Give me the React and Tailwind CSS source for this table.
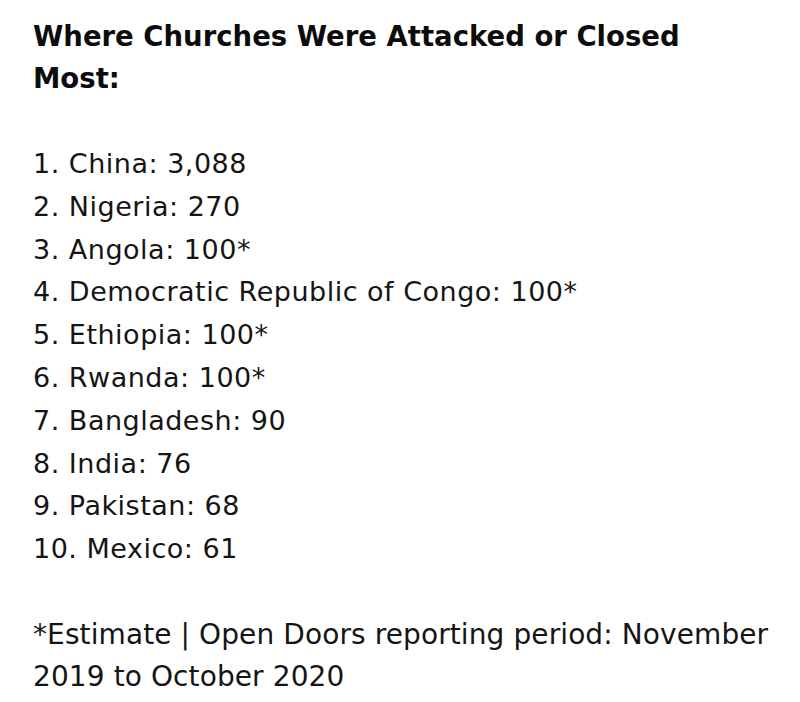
import React from 'react';

const countries = [
  { name: 'China', count: '3,088' },
  { name: 'Nigeria', count: '270' },
  { name: 'Angola', count: '100*' },
  { name: 'Democratic Republic of Congo', count: '100*' },
  { name: 'Ethiopia', count: '100*' },
  { name: 'Rwanda', count: '100*' },
  { name: 'Bangladesh', count: '90' },
  { name: 'India', count: '76' },
  { name: 'Pakistan', count: '68' },
  { name: 'Mexico', count: '61' },
];

const App = () => {
  return (
    <div className="w-[800px] h-[702px] bg-white overflow-hidden text-[#151515] font-['DejaVu_Sans',Verdana,sans-serif]">
      <div className="pl-[33px] pr-[20px] pt-[15px]">
        {/* Heading */}
        <h1 className="text-[27.5px] font-bold leading-[42px] text-[#0c0c0c]">
          Where Churches Were Attacked or Closed
          <br />
          Most:
        </h1>

        {/* Ranked list */}
        <ol className="mt-[44px] text-[27px] leading-[42.8px] tracking-[0.5px]">
          {countries.map((item, index) => (
            <li key={index}>
              {index + 1}. {item.name}: {item.count}
            </li>
          ))}
        </ol>

        {/* Footnote */}
        <p className="mt-[43px] text-[28px] leading-[42px] tracking-[0.1px]">
          *Estimate | Open Doors reporting period: November
          <br />
          2019 to October 2020
        </p>
      </div>
    </div>
  );
};

export default App;
